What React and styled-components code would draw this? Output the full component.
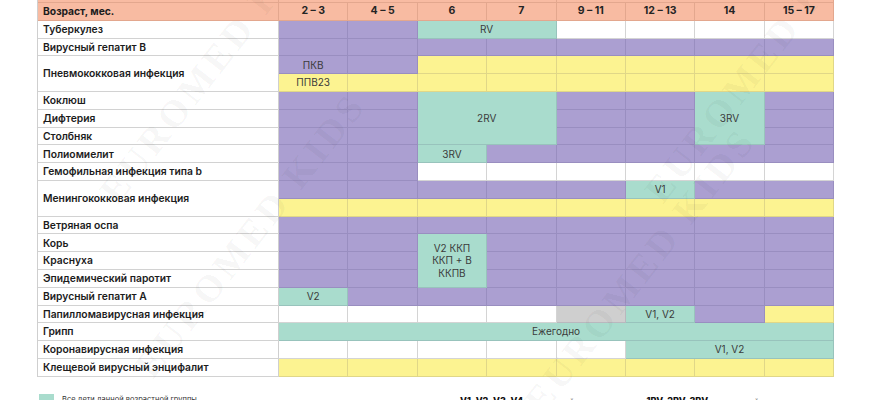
import React from "react";
import styled, { createGlobalStyle } from "styled-components";

const GlobalStyle = createGlobalStyle`
  html, body { margin: 0; padding: 0; background: #ffffff; overflow: hidden; }
  body { font-family: Inter, "Noto Sans", sans-serif; }
`;

const COLORS = {
  purple: "#ab9fd1",
  teal: "#a9dccd",
  yellow: "#fcf391",
  white: "#ffffff",
  grey: "#cfcfcf",
  orange: "#f8bba2",
};

const ROW_H = 17.8;

const Page = styled.div`
  position: relative;
  width: 870px;
  height: 400px;
  overflow: hidden;
`;

const Content = styled.div`
  padding-left: 37px;
  margin-top: -${ROW_H - 3}px;
  display: flex;
  flex-direction: column;
`;

const Grid = styled.div`
  display: grid;
  grid-template-columns: 241px repeat(8, 69.4px);
  grid-template-rows: repeat(22, ${ROW_H}px);
  border-left: 1px solid #cfcfcf;
  width: max-content;
`;

const lineFor = (fill) =>
  fill === "white" ? "#d4d4d4" : "rgba(40, 30, 80, 0.13)";

const Cell = styled.div`
  box-sizing: border-box;
  grid-column: ${(p) => p.$col} / span ${(p) => p.$span || 1};
  grid-row: ${(p) => p.$row} / span ${(p) => p.$rows || 1};
  background: ${(p) => COLORS[p.$fill]};
  border-right: 1px solid ${(p) => lineFor(p.$fill)};
  border-bottom: 1px solid ${(p) => lineFor(p.$fill)};
  display: flex;
  align-items: center;
  justify-content: center;
  text-align: center;
  white-space: pre-line;
  font-family: Inter, "Noto Sans", sans-serif;
  font-size: 10px;
  font-weight: 400;
  line-height: 12.5px;
  color: #3b3b3b;
`;

const HeadCell = styled(Cell)`
  font-size: 10.5px;
  font-weight: 700;
  color: #242424;
  border-right-color: rgba(120, 60, 40, 0.16);
  border-bottom-color: rgba(120, 60, 40, 0.16);
`;

const LabelCell = styled(Cell)`
  justify-content: flex-start;
  padding-left: 5px;
  font-size: 10.3px;
  font-weight: ${(p) => (p.$head ? 700 : 600)};
  color: #1c1c1c;
  border-right-color: ${(p) => (p.$head ? "rgba(120, 60, 40, 0.16)" : "#cfcfcf")};
  border-bottom-color: ${(p) => (p.$head ? "rgba(120, 60, 40, 0.16)" : "#d2d2d2")};
  text-align: left;
`;

const Legend = styled.div`
  display: flex;
  align-items: flex-start;
  margin-top: 17px;
  height: 20px;
`;

const LegendLeft = styled.div`
  display: flex;
  align-items: flex-start;
  gap: 8px;
  width: 421px;
  padding-left: 2px;
`;

const Swatch = styled.div`
  width: 15px;
  height: 12px;
  background: ${COLORS.teal};
`;

const LegendText = styled.span`
  font-family: Inter, "Noto Sans", sans-serif;
  font-size: 7.5px;
  color: #333;
  padding-top: 1px;
  white-space: nowrap;
`;

const LegendRight = styled.div`
  font-family: Inter, "Noto Sans", sans-serif;
  font-size: 7.2px;
  color: #333;
  white-space: nowrap;
  padding-top: 1px;
`;

const Strong = styled.b`
  font-size: 9px;
  font-weight: 800;
  color: #111;
`;

const Watermarks = styled.div`
  position: absolute;
  inset: 0;
  pointer-events: none;
`;

const Mark = styled.div`
  position: absolute;
  left: ${(p) => p.$x}px;
  top: ${(p) => p.$y}px;
  transform: translate(-50%, -50%) rotate(-52deg);
  font-family: "Liberation Serif", serif;
  font-weight: 700;
  font-size: 38px;
  letter-spacing: 4px;
  white-space: nowrap;
  color: rgba(0, 0, 0, 0.04);
`;

const P = "purple",
  T = "teal",
  Y = "yellow",
  W = "white",
  G = "grey";

// data columns 0..7 -> grid columns 2..9
const D = (row, c, fill, text = "", span = 1, rows = 1) => ({
  row,
  col: c + 2,
  fill,
  text,
  span,
  rows,
});
const fillRow = (row, fill, cols) => cols.map((c) => D(row, c, fill));

const labels = [
  [3, 1, "Туберкулез"],
  [4, 1, "Вирусный гепатит B"],
  [5, 2, "Пневмококковая инфекция"],
  [7, 1, "Коклюш"],
  [8, 1, "Дифтерия"],
  [9, 1, "Столбняк"],
  [10, 1, "Полиомиелит"],
  [11, 1, "Гемофильная инфекция типа b"],
  [12, 2, "Менингококковая инфекция"],
  [14, 1, "Ветряная оспа"],
  [15, 1, "Корь"],
  [16, 1, "Краснуха"],
  [17, 1, "Эпидемический паротит"],
  [18, 1, "Вирусный гепатит A"],
  [19, 1, "Папилломавирусная инфекция"],
  [20, 1, "Грипп"],
  [21, 1, "Коронавирусная инфекция"],
  [22, 1, "Клещевой вирусный энцифалит"],
];

const ages = ["2 – 3", "4 – 5", "6", "7", "9 – 11", "12 – 13", "14", "15 – 17"];

const cells = [
  // Туберкулез
  ...fillRow(3, P, [0, 1]),
  D(3, 2, T, "RV", 2),
  ...fillRow(3, W, [4, 5, 6, 7]),
  // Гепатит B
  ...fillRow(4, P, [0, 1, 2, 3, 4, 5, 6, 7]),
  // Пневмококковая
  D(5, 0, P, "ПКВ"),
  D(5, 1, P),
  ...fillRow(5, Y, [2, 3, 4, 5, 6, 7]),
  D(6, 0, Y, "ППВ23"),
  ...fillRow(6, Y, [1, 2, 3, 4, 5, 6, 7]),
  // Коклюш / Дифтерия / Столбняк
  ...fillRow(7, P, [0, 1, 4, 5, 7]),
  D(7, 2, T, "2RV", 2, 3),
  D(7, 6, T, "3RV", 1, 3),
  ...fillRow(8, P, [0, 1, 4, 5, 7]),
  ...fillRow(9, P, [0, 1, 4, 5, 7]),
  // Полиомиелит
  ...fillRow(10, P, [0, 1]),
  D(10, 2, T, "3RV"),
  ...fillRow(10, P, [3, 4, 5, 6, 7]),
  // Гемофильная
  ...fillRow(11, P, [0, 1]),
  ...fillRow(11, W, [2, 3, 4, 5, 6, 7]),
  // Менингококковая
  ...fillRow(12, P, [0, 1, 2, 3, 4]),
  D(12, 5, T, "V1"),
  ...fillRow(12, P, [6, 7]),
  ...fillRow(13, Y, [0, 1, 2, 3, 4, 5, 6, 7]),
  // Ветряная оспа
  ...fillRow(14, P, [0, 1, 2, 3, 4, 5, 6, 7]),
  // Корь / Краснуха / Паротит
  ...fillRow(15, P, [0, 1, 3, 4, 5, 6, 7]),
  D(15, 2, T, "V2 ККП\nККП + В\nККПВ", 1, 3),
  ...fillRow(16, P, [0, 1, 3, 4, 5, 6, 7]),
  ...fillRow(17, P, [0, 1, 3, 4, 5, 6, 7]),
  // Гепатит A
  D(18, 0, T, "V2"),
  ...fillRow(18, P, [1, 2, 3, 4, 5, 6, 7]),
  // Папилломавирусная
  ...fillRow(19, W, [0, 1, 2, 3]),
  D(19, 4, G),
  D(19, 5, T, "V1, V2"),
  D(19, 6, P),
  D(19, 7, Y),
  // Грипп
  D(20, 0, T, "Ежегодно", 8),
  // Коронавирусная
  ...fillRow(21, W, [0, 1, 2, 3, 4]),
  D(21, 5, T, "V1, V2", 3),
  // Клещевой
  ...fillRow(22, Y, [0, 1, 2, 3, 4, 5, 6, 7]),
];

export default function App() {
  return (
    <Page>
      <GlobalStyle />
      <Content>
        <Grid>
          {/* top partially visible header row */}
          <HeadCell $row={1} $col={1} $fill="orange" />
          <HeadCell $row={1} $col={2} $span={4} $fill="orange">
            Дети до 1 года
          </HeadCell>
          <HeadCell $row={1} $col={6} $span={4} $fill="orange">
            Дети до 18 лет
          </HeadCell>

          {/* age header */}
          <LabelCell $head $row={2} $col={1} $fill="orange">
            Возраст, мес.
          </LabelCell>
          {ages.map((a, i) => (
            <HeadCell key={a} $row={2} $col={i + 2} $fill="orange">
              {a}
            </HeadCell>
          ))}

          {labels.map(([row, rows, text]) => (
            <LabelCell key={text} $row={row} $rows={rows} $col={1} $fill="white">
              {text}
            </LabelCell>
          ))}

          {cells.map((c, i) => (
            <Cell
              key={i}
              $row={c.row}
              $col={c.col}
              $span={c.span}
              $rows={c.rows}
              $fill={c.fill}
            >
              {c.text}
            </Cell>
          ))}
        </Grid>

        <Legend>
          <LegendLeft>
            <Swatch />
            <LegendText>Все дети данной возрастной группы</LegendText>
          </LegendLeft>
          <LegendRight>
            <Strong>V1, V2, V3, V4</Strong> – порядковый номер вакцинации;{" "}
            <Strong>1RV, 2RV, 3RV</Strong> – порядковый номер
          </LegendRight>
        </Legend>
      </Content>

      <Watermarks>
        <Mark $x={215} $y={60}>EUROMED KIDS</Mark>
        <Mark $x={250} $y={235}>EUROMED KIDS</Mark>
        <Mark $x={640} $y={270}>EUROMED KIDS</Mark>
        <Mark $x={760} $y={60}>EUROMED KIDS</Mark>
      </Watermarks>
    </Page>
  );
}
